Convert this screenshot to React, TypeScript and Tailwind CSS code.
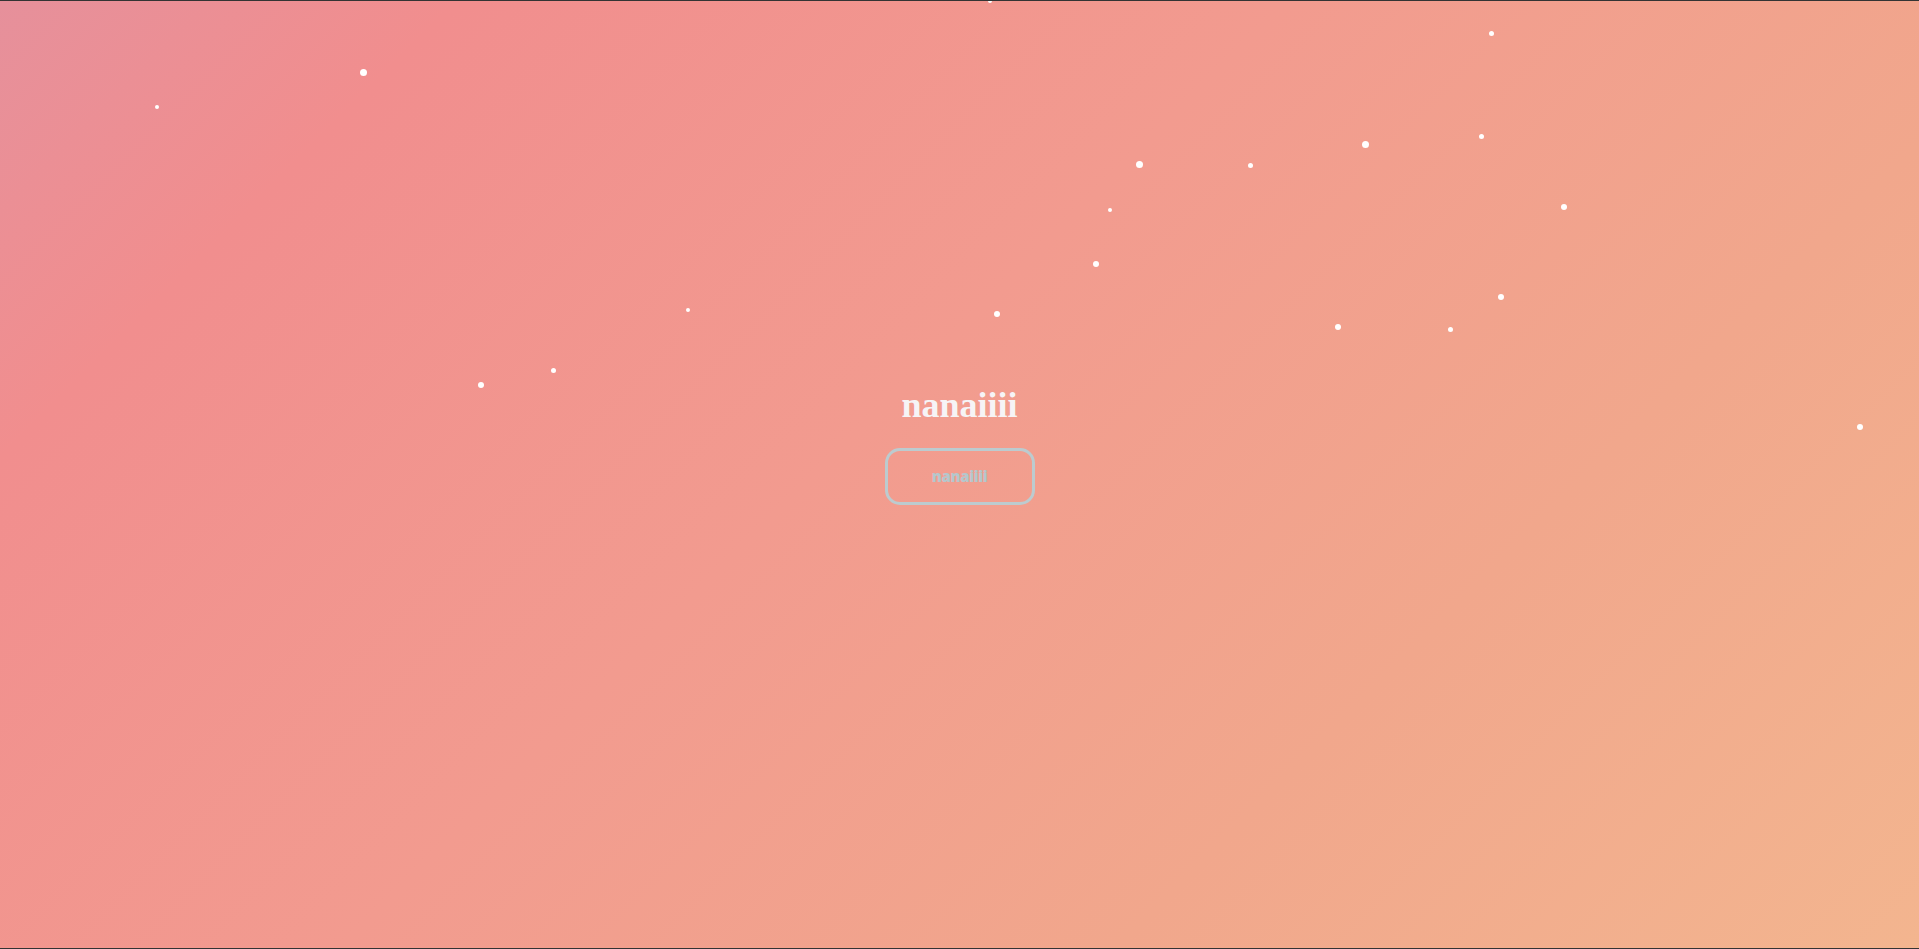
const dots = [
  { x: 157, y: 106, d: 4 },
  { x: 363, y: 71, d: 7 },
  { x: 688, y: 309, d: 4 },
  { x: 553, y: 369, d: 5 },
  { x: 481, y: 384, d: 6 },
  { x: 997, y: 313, d: 6 },
  { x: 990, y: 0, d: 4 },
  { x: 1096, y: 263, d: 6 },
  { x: 1110, y: 209, d: 4 },
  { x: 1139, y: 163, d: 7 },
  { x: 1250, y: 164, d: 5 },
  { x: 1365, y: 143, d: 7 },
  { x: 1481, y: 135, d: 5 },
  { x: 1491, y: 32, d: 5 },
  { x: 1564, y: 206, d: 6 },
  { x: 1501, y: 296, d: 6 },
  { x: 1338, y: 326, d: 6 },
  { x: 1450, y: 328, d: 5 },
  { x: 1860, y: 426, d: 6 },
];

export default function App() {
  return (
    <div className="relative h-screen w-full overflow-hidden border-y border-[#333333] bg-[linear-gradient(135deg,#e6909b_0%,#f18e8e_16%,#f29b8f_45%,#f1a78c_72%,#f3b58f_100%)]">
      {/* particles */}
      {dots.map((p, i) => (
        <span
          key={i}
          className="absolute rounded-full bg-white"
          style={{
            left: p.x - p.d / 2,
            top: p.y - p.d / 2,
            width: p.d,
            height: p.d,
          }}
        />
      ))}

      <div className="flex h-full flex-col items-center justify-center pb-[57px]">
        <h1 className="font-['Liberation_Serif',serif] text-[36px] font-bold leading-none text-[#f6f4f6]">
          nanaiiii
        </h1>
        <button className="mt-[25px] flex h-[57px] w-[150px] items-center justify-center rounded-[15px] border-[3px] border-[#bccbcf] font-['Open_Sans',sans-serif] text-[15px] font-extrabold tracking-tight text-[#b5c7cc]">
          nanaiiii
        </button>
      </div>
    </div>
  );
}
